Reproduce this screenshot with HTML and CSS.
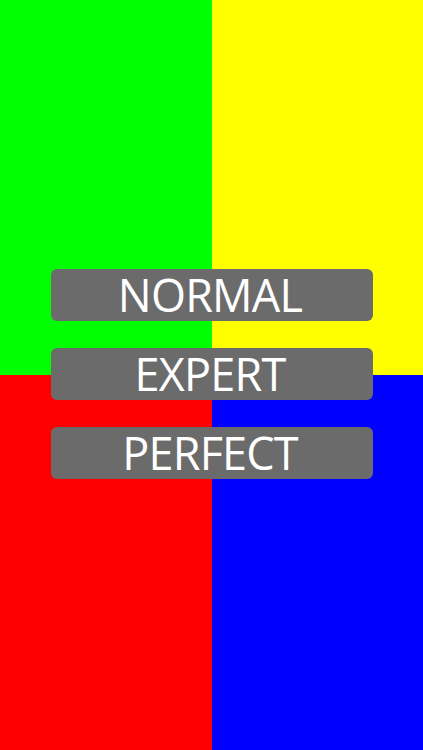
FILE: index.html
```html
<!DOCTYPE html>
<html>
<head>
<meta charset="utf-8">
<link rel="stylesheet" href="styles.css">
</head>
<body>
<div class="screen">
  <div class="quads">
    <div class="quad green"></div>
    <div class="quad yellow"></div>
    <div class="quad red"></div>
    <div class="quad blue"></div>
  </div>
  <div class="menu">
    <div class="btn">NORMAL</div>
    <div class="btn">EXPERT</div>
    <div class="btn">PERFECT</div>
  </div>
</div>
</body>
</html>
```

FILE: styles.css
```css
html, body {
  margin: 0;
  padding: 0;
}
body {
  font-family: "Open Sans", "Liberation Sans", sans-serif;
}
.screen {
  position: relative;
  width: 423px;
  height: 750px;
  overflow: hidden;
}
.quads {
  display: grid;
  grid-template-columns: 212px 211px;
  grid-template-rows: 375px 375px;
  width: 423px;
  height: 750px;
}
.green { background: #00ff00; }
.yellow { background: #ffff00; }
.red { background: #ff0000; }
.blue { background: #0000ff; }
.menu {
  position: absolute;
  top: 269px;
  left: 51px;
  width: 322px;
  display: flex;
  flex-direction: column;
  gap: 27px;
}
.btn {
  height: 52px;
  border-radius: 6px;
  background: #6b6b6b;
  color: #ffffff;
  display: flex;
  align-items: center;
  justify-content: center;
  font-size: 45px;
  letter-spacing: -0.8px;
  line-height: 1;
  padding-right: 4px;
  padding-bottom: 2px;
  box-sizing: border-box;
}
```
